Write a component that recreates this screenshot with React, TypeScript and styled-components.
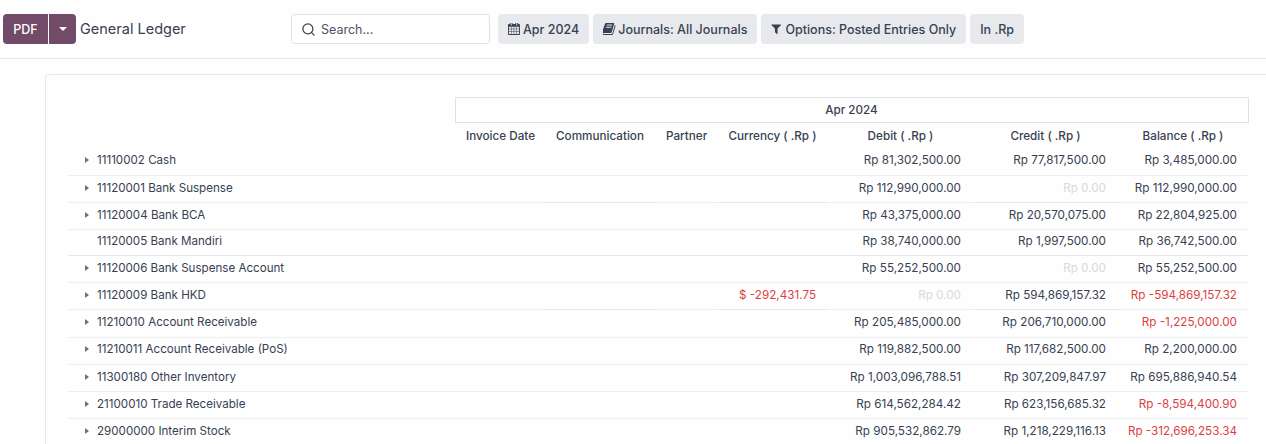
import React from 'react'
import styled, { createGlobalStyle } from 'styled-components'
import { Search } from 'lucide-react'

const rows = [
    { name: '11110002 Cash', debit: 'Rp 81,302,500.00', credit: 'Rp 77,817,500.00', balance: 'Rp 3,485,000.00' },
    { name: '11120001 Bank Suspense', debit: 'Rp 112,990,000.00', credit: 'Rp 0.00', balance: 'Rp 112,990,000.00', accent: true },
    { name: '11120004 Bank BCA', debit: 'Rp 43,375,000.00', credit: 'Rp 20,570,075.00', balance: 'Rp 22,804,925.00' },
    { name: '11120005 Bank Mandiri', debit: 'Rp 38,740,000.00', credit: 'Rp 1,997,500.00', balance: 'Rp 36,742,500.00', leaf: true, height: 26, strong: true },
    { name: '11120006 Bank Suspense Account', debit: 'Rp 55,252,500.00', credit: 'Rp 0.00', balance: 'Rp 55,252,500.00' },
    { name: '11120009 Bank HKD', currency: '$ -292,431.75', debit: 'Rp 0.00', credit: 'Rp 594,869,157.32', balance: 'Rp -594,869,157.32', accent: true },
    { name: '11210010 Account Receivable', debit: 'Rp 205,485,000.00', credit: 'Rp 206,710,000.00', balance: 'Rp -1,225,000.00', height: 28 },
    { name: '11210011 Account Receivable (PoS)', debit: 'Rp 119,882,500.00', credit: 'Rp 117,682,500.00', balance: 'Rp 2,200,000.00', lift: 4 },
    { name: '11300180 Other Inventory', debit: 'Rp 1,003,096,788.51', credit: 'Rp 307,209,847.97', balance: 'Rp 695,886,940.54' },
    { name: '21100010 Trade Receivable', debit: 'Rp 614,562,284.42', credit: 'Rp 623,156,685.32', balance: 'Rp -8,594,400.90' },
    { name: '29000000 Interim Stock', debit: 'Rp 905,532,862.79', credit: 'Rp 1,218,229,116.13', balance: 'Rp -312,696,253.34' },
]

const tone = (value: string) => {
    if (value === 'Rp 0.00') return 'muted'
    return value.includes('-') ? 'negative' : 'normal'
}

const CalendarIcon = () => (
    <FilterIcon viewBox="64 128 1600 1664" $w={11.5} $h={12} $gap={3.5}>
        <path d="M192 1664h288v-288h-288v288zm352 0h320v-288h-320v288zm-352-352h288v-320h-288v320zm352 0h320v-320h-320v320zm-352-384h288v-288h-288v288zm736 736h320v-288h-320v288zm-384-736h320v-288h-320v288zm768 736h288v-288h-288v288zm-384-352h320v-320h-320v320zm-352-864v-288q0-13-9.5-22.5t-22.5-9.5h-64q-13 0-22.5 9.5t-9.5 22.5v288q0 13 9.5 22.5t22.5 9.5h64q13 0 22.5-9.5t9.5-22.5zm736 864h288v-320h-288v320zm-384-384h320v-288h-320v288zm384 0h288v-288h-288v288zm32-480v-288q0-13-9.5-22.5t-22.5-9.5h-64q-13 0-22.5 9.5t-9.5 22.5v288q0 13 9.5 22.5t22.5 9.5h64q13 0 22.5-9.5t9.5-22.5zm384-64v1280q0 52-38 90t-90 38h-1408q-52 0-90-38t-38-90v-1280q0-52 38-90t90-38h128v-96q0-66 47-113t113-47h64q66 0 113 47t47 113v96h384v-96q0-66 47-113t113-47h64q66 0 113 47t47 113v96h128q52 0 90 38t38 90z" />
    </FilterIcon>
)

const BookIcon = () => (
    <FilterIcon viewBox="128 192 1536 1472" $w={12.5} $h={12} $gap={2.5}>
        <path d="M1639 478q40 57 18 129l-275 906q-19 64-76.5 107.5t-122.5 43.5h-923q-77 0-148.5-53.5t-99.5-131.5q-24-67-2-127 0-4 3-27t4-37q1-8-3-21.5t-3-19.5q2-11 8-21t16.5-23.5 16.5-23.5q23-38 45-91.5t30-91.5q3-10 .5-30t-.5-28q3-11 17-28t17-23q21-36 42-92t25-90q1-9-2.5-32t.5-28q4-13 22-30.5t22-22.5q19-26 42.5-84.5t27.5-96.5q1-8-3-25.5t-2-26.5q2-8 9-18t18-23 17-21q8-12 16.5-30.5t15-35 16-36 19.5-32 26.5-23.5 36-11.5 47.5 5.5l-1 3q38-9 51-9h761q74 0 114 56t18 130l-274 906q-36 119-71.5 153.5t-128.5 34.5h-869q-27 0-38 15-11 16-1 43 24 70 144 70h923q29 0 56-15.5t35-41.5l300-987q7-22 5-57 38 15 59 43zm-1064 2q-4 13 2 22.5t20 9.5h608q13 0 25.5-9.5t16.5-22.5l21-64q4-13-2-22.5t-20-9.5h-608q-13 0-25.5 9.5t-16.5 22.5zm-83 256q-4 13 2 22.5t20 9.5h608q13 0 25.5-9.5t16.5-22.5l21-64q4-13-2-22.5t-20-9.5h-608q-13 0-25.5 9.5t-16.5 22.5z" />
    </FilterIcon>
)

const FunnelIcon = () => (
    <FilterIcon viewBox="128 256 1536 1408" $w={10.5} $h={10.5} $gap={3.5}>
        <path d="M1595 295q17 41-14 70l-493 493v742q0 42-39 59-13 5-25 5-27 0-45-19l-256-256q-19-19-19-45v-486l-493-493q-31-29-14-70 17-39 59-39h1280q42 0 59 39z" />
    </FilterIcon>
)

const App: React.FC = () => {
    return (
        <Page>
            <GlobalStyle />
            <TopBar>
                <PrintGroup>
                    <PdfButton>PDF</PdfButton>
                    <CaretButton aria-label="More">
                        <CaretDown />
                    </CaretButton>
                </PrintGroup>
                <Title>General Ledger</Title>
                <SearchBox>
                    <Search size={15} strokeWidth={2} color="#374151" />
                    <SearchInput placeholder="Search..." />
                </SearchBox>
                <Filters>
                    <FilterButton>
                        <CalendarIcon />
                        Apr 2024
                    </FilterButton>
                    <FilterButton>
                        <BookIcon />
                        Journals: All Journals
                    </FilterButton>
                    <FilterButton>
                        <FunnelIcon />
                        Options: Posted Entries Only
                    </FilterButton>
                    <FilterButton>In .Rp</FilterButton>
                </Filters>
            </TopBar>
            <Content>
                <Sheet>
                    <Ledger>
                        <colgroup>
                            <col width={387} />
                            <col width={90} />
                            <col width={110} />
                            <col width={62} />
                            <col width={111} />
                            <col width={145} />
                            <col width={145} />
                            <col width={130} />
                        </colgroup>
                        <thead>
                            <tr>
                                <BlankHead />
                                <PeriodHead colSpan={7}>Apr 2024</PeriodHead>
                            </tr>
                            <tr>
                                <BlankHead />
                                <ColumnHead>Invoice Date</ColumnHead>
                                <ColumnHead>Communication</ColumnHead>
                                <ColumnHead>Partner</ColumnHead>
                                <ColumnHead>Currency ( .Rp )</ColumnHead>
                                <ColumnHead>Debit ( .Rp )</ColumnHead>
                                <ColumnHead>Credit ( .Rp )</ColumnHead>
                                <ColumnHead>Balance ( .Rp )</ColumnHead>
                            </tr>
                        </thead>
                        <tbody>
                            {rows.map((row) => {
                                const lift = row.lift || 2
                                return (
                                    <LedgerRow
                                        key={row.name}
                                        rowHeight={row.height || 27}
                                        strong={!!row.strong}
                                        accent={!!row.accent}
                                    >
                                        <NameCell lift={lift}>
                                            <NameWrap>
                                                <CaretSlot>{!row.leaf && <CaretRight />}</CaretSlot>
                                                {row.name}
                                            </NameWrap>
                                        </NameCell>
                                        <td />
                                        <td />
                                        <td />
                                        <AmountCell lift={lift} tone={row.currency ? 'negative' : 'normal'}>{row.currency}</AmountCell>
                                        <AmountCell lift={lift} tone={tone(row.debit)}>{row.debit}</AmountCell>
                                        <AmountCell lift={lift} tone={tone(row.credit)}>{row.credit}</AmountCell>
                                        <AmountCell lift={lift} tone={tone(row.balance)}>{row.balance}</AmountCell>
                                    </LedgerRow>
                                )
                            })}
                        </tbody>
                    </Ledger>
                </Sheet>
            </Content>
        </Page>
    )
}

export default App

const GlobalStyle = createGlobalStyle`
    html, body {
        margin: 0;
        height: 444px;
        overflow: hidden;
        background: #fefefe;
    }

    body, input, button {
        font-family: Inter, "Noto Sans", sans-serif;
    }
`

const Page = styled.div`
    width: 1266px;
    height: 444px;
    overflow: hidden;
    color: #374151;
`

const TopBar = styled.header`
    display: flex;
    align-items: center;
    height: 59px;
    padding: 0 0 0 3px;
    box-sizing: border-box;
    border-bottom: 1px solid #e4e6e9;
`

const PrintGroup = styled.div`
    display: flex;
    gap: 1px;
`

const PdfButton = styled.button`
    width: 45px;
    height: 30px;
    padding: 0;
    border: 0;
    border-radius: 4px 0 0 4px;
    background: #714b67;
    color: #fff;
    font-size: 12.5px;
    font-weight: 500;
`

const CaretButton = styled.button`
    display: flex;
    align-items: center;
    justify-content: center;
    width: 27px;
    height: 30px;
    padding: 0;
    border: 0;
    border-radius: 0 4px 4px 0;
    background: #714b67;
`

const CaretDown = styled.span`
    border-top: 4px solid #fff;
    border-left: 4px solid transparent;
    border-right: 4px solid transparent;
`

const Title = styled.h1`
    width: 211px;
    margin: 0 0 2px 4px;
    font-size: 14.5px;
    font-weight: 400;
    color: #374151;
`

const SearchBox = styled.label`
    display: flex;
    align-items: center;
    gap: 5px;
    width: 199px;
    height: 30px;
    padding: 0 9px;
    box-sizing: border-box;
    border: 1px solid #dee2e6;
    border-radius: 4px;
    background: #fff;
`

const SearchInput = styled.input`
    flex: 1;
    min-width: 0;
    padding: 0;
    border: 0;
    outline: 0;
    background: transparent;
    font-size: 12.5px;
    color: #374151;

    &::placeholder {
        color: #4b5563;
        opacity: 1;
    }
`

const Filters = styled.div`
    display: flex;
    gap: 4px;
    margin-left: 8px;
`

const FilterButton = styled.button`
    display: flex;
    align-items: center;
    height: 30px;
    padding: 0 10px;
    border: 0;
    border-radius: 4px;
    background: #e7e9ed;
    color: #374151;
    font-size: 12.5px;
    font-weight: 500;
    white-space: nowrap;
`

const FilterIcon = styled.svg<{ $w: number; $h: number; $gap: number }>`
    width: ${({ $w }) => $w}px;
    height: ${({ $h }) => $h}px;
    margin-right: ${({ $gap }) => $gap}px;
    fill: #374151;
    flex: none;
`

const Content = styled.main`
    padding: 15px 0 0 45px;
`

const Sheet = styled.section`
    height: 400px;
    padding: 22px 18px 0 22px;
    border-top: 1px solid #e7e9ed;
    border-left: 1px solid #e7e9ed;
    border-radius: 4px 0 0 0;
`

const Ledger = styled.table`
    width: 1180px;
    table-layout: fixed;
    border-collapse: collapse;
    font-size: 11.7px;
`

const BlankHead = styled.th`
    padding: 0;
`

const PeriodHead = styled.th`
    height: 24px;
    padding: 0;
    border: 1px solid #dee2e6;
    font-weight: 500;
    text-align: center;
`

const ColumnHead = styled.th`
    height: 25px;
    padding: 0 11px;
    font-weight: 500;
    text-align: center;
    white-space: nowrap;
`

const LedgerRow = styled.tr<{ rowHeight: number; strong: boolean; accent: boolean }>`
    height: ${({ rowHeight }) => rowHeight}px;
    border-bottom: 1px solid ${({ strong }) => (strong ? '#e4e6ea' : '#eff0f2')};

    td:nth-child(3),
    td:nth-child(5),
    td:nth-child(7) {
        border-bottom: 1px solid ${({ accent, strong }) => (accent || strong ? '#e4e6ea' : '#eff0f2')};
    }
`

const NameCell = styled.td<{ lift: number }>`
    padding: 0 0 ${({ lift }) => lift}px;
    font-size: 11.6px;
`

const NameWrap = styled.div`
    display: flex;
    align-items: center;
    padding-left: 17px;
    white-space: nowrap;
`

const CaretSlot = styled.span`
    display: flex;
    align-items: center;
    width: 12px;
`

const CaretRight = styled.span`
    border-left: 4px solid #6b7280;
    border-top: 3.5px solid transparent;
    border-bottom: 3.5px solid transparent;
`

const AmountCell = styled.td<{ tone: string; lift: number }>`
    padding: 0 12px ${({ lift }) => lift}px 0;
    text-align: right;
    white-space: nowrap;
    color: ${({ tone }) => {
        if (tone === 'negative') return '#dc3f42'
        if (tone === 'muted') return '#d8dadd'
        return '#374151'
    }};

    &:last-child {
        padding-right: 11px;
    }
`
